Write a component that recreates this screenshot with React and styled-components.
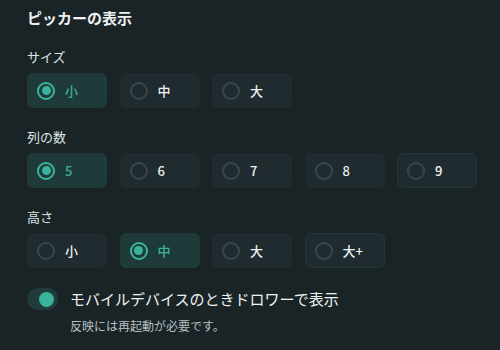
import React, { useState } from 'react';
import styled, { createGlobalStyle } from 'styled-components';

const GlobalStyle = createGlobalStyle`
    html, body {
        margin      : 0;
        padding     : 0;
        background  : #1a2427;
    }
    body {
        font-family : "Noto Sans CJK JP", "Noto Sans", sans-serif;
        color       : #e4e8e9;
    }
`;

const Panel = styled.div`
    width           : 500px;
    height          : 350px;
    box-sizing      : border-box;
    padding         : 7px 20px 0 27px;
    background      : #1a2427;
`;

const Title = styled.h2`
    margin          : 0 0 19px;
    font-size       : 15px;
    font-weight     : 700;
    line-height     : 22px;
    color           : #eef1f2;
`;

const Section = styled.section`
    margin-bottom   : 20px;
`;

const Label = styled.div`
    font-size       : 13px;
    line-height     : 18px;
    margin-bottom   : 7px;
    color           : #dfe4e5;
`;

const Options = styled.div`
    display         : flex;
    gap             : 12.5px;
`;

const Option = styled.button`
    display         : flex;
    align-items     : center;
    gap             : 10px;
    flex            : 0 0 80px;
    height          : 35px;
    box-sizing      : border-box;
    padding         : 0 0 0 9px;
    border          : 1px solid ${p => p.$hover ? '#213537' : 'transparent'};
    border-radius   : 6px;
    background      : ${p => p.$selected ? '#1e3b39' : '#1f2b2f'};
    color           : ${p => p.$selected ? '#3bb39c' : '#eef1f2'};
    font-family     : inherit;
    font-size       : 13px;
    font-weight     : 500;
    cursor          : pointer;
`;

const Radio = styled.span`
    position        : relative;
    width           : 18px;
    height          : 18px;
    box-sizing      : border-box;
    border-radius   : 50%;
    border          : 2px solid ${p => p.$selected ? '#3bb39c' : '#3a4649'};
    flex-shrink     : 0;

    &::after {
        content         : '';
        position        : absolute;
        inset           : 2.5px;
        border-radius   : 50%;
        background      : ${p => p.$selected ? '#3bb39c' : 'transparent'};
    }
`;

const ToggleRow = styled.label`
    display         : flex;
    align-items     : center;
    gap             : 12px;
    margin-top      : 3px;
    cursor          : pointer;
`;

const Track = styled.span`
    display         : flex;
    align-items     : center;
    justify-content : ${p => p.$on ? 'flex-end' : 'flex-start'};
    width           : 31px;
    height          : 22px;
    box-sizing      : border-box;
    padding         : 0 4px;
    border-radius   : 11px;
    background      : ${p => p.$on ? '#1f3c3a' : '#2a3538'};
`;

const Knob = styled.span`
    width           : 15px;
    height          : 15px;
    border-radius   : 50%;
    background      : ${p => p.$on ? '#3bb39c' : '#7b8689'};
`;

const ToggleText = styled.span`
    font-size       : 15px;
    line-height     : 22px;
    color           : #eef1f2;
`;

const Hint = styled.div`
    margin          : 7px 0 0 43px;
    font-size       : 12px;
    line-height     : 18px;
    color           : #b9c1c3;
`;

const groups = [
    { key: 'size',   label: 'サイズ', options: ['小', '中', '大'] },
    { key: 'cols',   label: '列の数', options: ['5', '6', '7', '8', '9'], hover: '9' },
    { key: 'height', label: '高さ',   options: ['小', '中', '大', '大+'], hover: '大+' },
];

export default function App() {
    const [values, setValues] = useState({ size: '小', cols: '5', height: '中' });
    const [drawer, setDrawer] = useState(true);

    return (
        <>
            <GlobalStyle />
            <Panel>
                <Title>ピッカーの表示</Title>
                {groups.map(group => (
                    <Section key={group.key}>
                        <Label>{group.label}</Label>
                        <Options>
                            {group.options.map(opt => {
                                const selected = values[group.key] === opt;
                                return (
                                    <Option
                                        key={opt}
                                        $selected={selected}
                                        $hover={group.hover === opt}
                                        onClick={() => setValues({ ...values, [group.key]: opt })}
                                    >
                                        <Radio $selected={selected} />
                                        {opt}
                                    </Option>
                                );
                            })}
                        </Options>
                    </Section>
                ))}
                <ToggleRow onClick={() => setDrawer(!drawer)}>
                    <Track $on={drawer}><Knob $on={drawer} /></Track>
                    <ToggleText>モバイルデバイスのときドロワーで表示</ToggleText>
                </ToggleRow>
                <Hint>反映には再起動が必要です。</Hint>
            </Panel>
        </>
    );
}
